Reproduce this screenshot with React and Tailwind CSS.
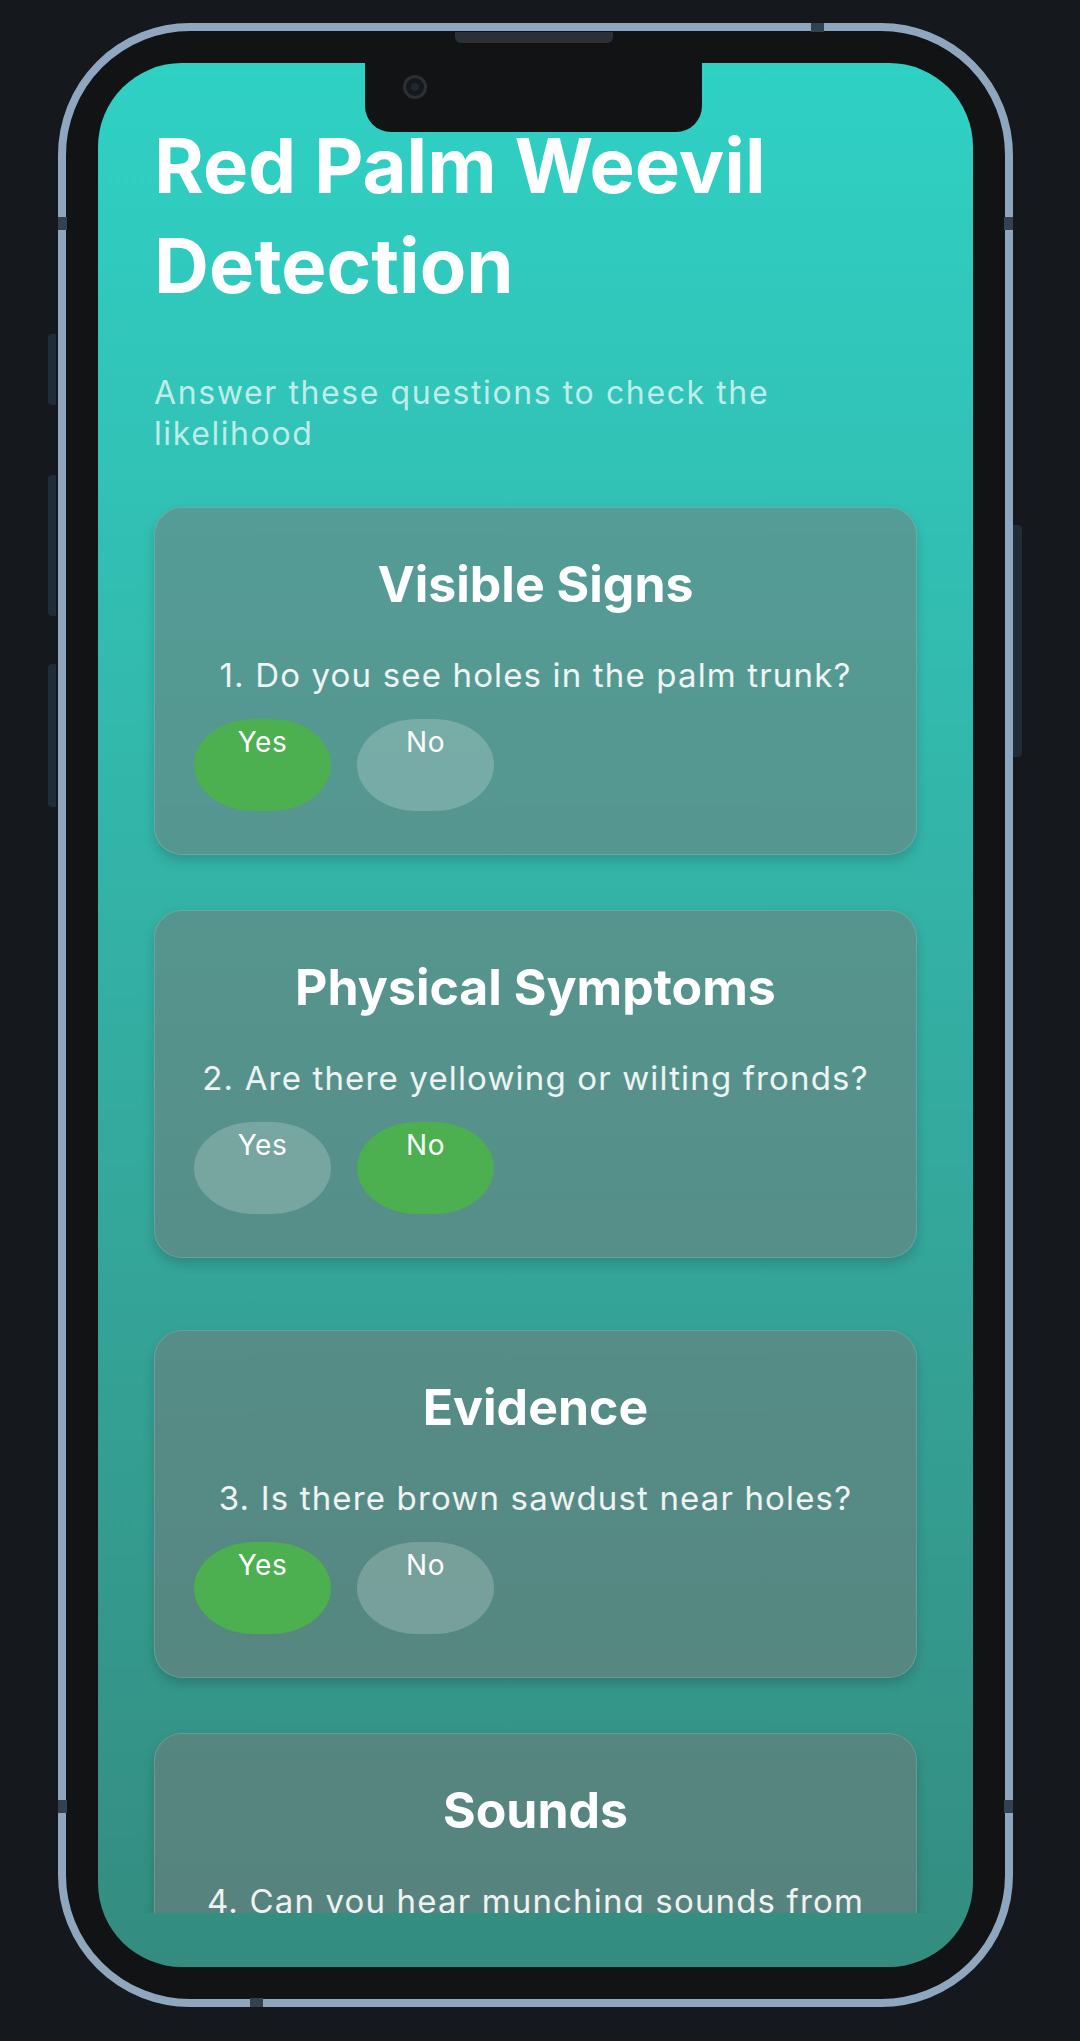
import React, { useState } from "react";

const questions = [
  { id: 1, title: "Visible Signs", lines: ["1. Do you see holes in the palm trunk?"], answer: "yes" },
  { id: 2, title: "Physical Symptoms", lines: ["2. Are there yellowing or wilting fronds?"], answer: "no" },
  { id: 3, title: "Evidence", lines: ["3. Is there brown sawdust near holes?"], answer: "yes", extra: "mt-[17px]" },
  { id: 4, title: "Sounds", lines: ["4. Can you hear munching sounds from", "the trunk?"], answer: null },
];

function Choice({ label, active, onClick }) {
  return (
    <button
      onClick={onClick}
      className={
        "flex items-start justify-center w-[137px] h-[92px] rounded-[60px/46px] pt-[7px] text-[28px] leading-[32px] tracking-[0.02em] text-white " +
        (active ? "bg-[#4caf50]" : "bg-white/20")
      }
    >
      {label}
    </button>
  );
}

function QuestionCard({ q, value, setValue }) {
  return (
    <div
      className={
        "rounded-[28px] border border-white/15 bg-[rgba(120,120,120,0.5)] shadow-[0_6px_12px_rgba(0,0,0,0.16)] px-[39px] pt-[47px] pb-[43px] " +
        (q.extra || "")
      }
    >
      <h2 className="text-center text-[50px] leading-[58px] font-bold text-white">{q.title}</h2>
      <p className="mt-[42px] text-center text-[33px] leading-[40px] tracking-[0.035em] text-white/90">
        {q.lines.map((l, i) => (
          <React.Fragment key={i}>
            {i > 0 && <br />}
            {l}
          </React.Fragment>
        ))}
      </p>
      <div className="mt-[24px] flex gap-[26px]">
        <Choice label="Yes" active={value === "yes"} onClick={() => setValue("yes")} />
        <Choice label="No" active={value === "no"} onClick={() => setValue("no")} />
      </div>
    </div>
  );
}

export default function App() {
  const [answers, setAnswers] = useState(
    Object.fromEntries(questions.map((q) => [q.id, q.answer]))
  );

  return (
    <div className="w-[1080px] h-[2041px] overflow-hidden bg-[#15191d] pt-[23px] font-['Inter',_'Noto_Sans',_sans-serif]">
      <div className="relative ml-[58px] w-[955px] h-[1984px]">
        {/* side buttons */}
        <div className="absolute left-[-10px] top-[311px] h-[71px] w-[8px] rounded-l-sm bg-[#1f2d3a]" />
        <div className="absolute left-[-10px] top-[452px] h-[141px] w-[8px] rounded-l-sm bg-[#1f2d3a]" />
        <div className="absolute left-[-10px] top-[641px] h-[143px] w-[8px] rounded-l-sm bg-[#1f2d3a]" />
        <div className="absolute right-[-9px] top-[502px] h-[232px] w-[9px] rounded-r-sm bg-[#1f2d3a]" />

        <div className="h-full w-full rounded-[132px] border-[8px] border-[#8ea7be] bg-[#111315] p-[32px]">
          <div className="relative h-full w-full overflow-hidden rounded-[84px] bg-linear-to-b from-[#2fd1c5] to-[#348c80]">
            {/* notch */}
            <div className="absolute top-0 left-[267px] z-10 w-[337px] h-[69px] rounded-b-[26px] bg-[#111315]">
              <div className="absolute left-[38px] top-[12px] w-[24px] h-[24px] rounded-full border-[3px] border-[#2a3036] bg-[#15191d] flex items-center justify-center">
                <div className="w-[8px] h-[8px] rounded-full bg-[#20272e]" />
              </div>
            </div>

            <div className="h-[1850px] overflow-hidden px-[56px] pt-[52px]">
              <h1 className="text-[76px] leading-[100px] font-bold text-white">
                Red Palm Weevil
                <br />
                Detection
              </h1>
              <p className="mt-[57px] text-[32px] leading-[41px] tracking-[0.05em] text-white/70">
                Answer these questions to check the
                <br />
                likelihood
              </p>
              <div className="mt-[53px] flex flex-col gap-[55px]">
                {questions.map((q) => (
                  <QuestionCard
                    key={q.id}
                    q={q}
                    value={answers[q.id]}
                    setValue={(v) => setAnswers({ ...answers, [q.id]: v })}
                  />
                ))}
              </div>
            </div>
          </div>
        </div>

        {/* speaker + antenna lines */}
        <div className="absolute left-[397px] top-[9px] w-[158px] h-[11px] rounded-b-md bg-[#2b3036]" />
        <div className="absolute left-[753px] top-0 w-[13px] h-[9px] bg-[#33424f]" />
        <div className="absolute left-[192px] bottom-0 w-[13px] h-[9px] bg-[#33424f]" />
        <div className="absolute left-0 top-[194px] w-[9px] h-[13px] bg-[#33424f]" />
        <div className="absolute right-0 top-[194px] w-[9px] h-[13px] bg-[#33424f]" />
        <div className="absolute left-0 top-[1777px] w-[9px] h-[13px] bg-[#33424f]" />
        <div className="absolute right-0 top-[1777px] w-[9px] h-[13px] bg-[#33424f]" />
      </div>
    </div>
  );
}
